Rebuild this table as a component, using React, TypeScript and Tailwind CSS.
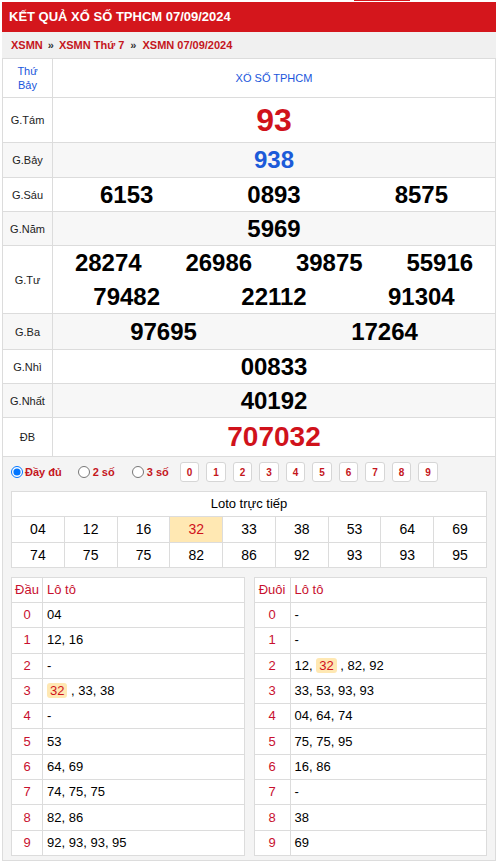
import React from "react";

const RED = "text-[#d0121b]";

const loto = [
  ["04", "12", "16", "32", "33", "38", "53", "64", "69"],
  ["74", "75", "75", "82", "86", "92", "93", "93", "95"],
];

// đầu / đuôi lists; "32" gets the highlight chip
const dau: string[][] = [
  ["04"],
  ["12", "16"],
  [],
  ["32", "33", "38"],
  [],
  ["53"],
  ["64", "69"],
  ["74", "75", "75"],
  ["82", "86"],
  ["92", "93", "93", "95"],
];
const duoi: string[][] = [
  [],
  [],
  ["12", "32", "82", "92"],
  ["33", "53", "93", "93"],
  ["04", "64", "74"],
  ["75", "75", "95"],
  ["16", "86"],
  [],
  ["38"],
  ["69"],
];

const LotoList = ({ nums }: { nums: string[] }) => {
  if (nums.length === 0) return <span>-</span>;
  return (
    <span>
      {nums.map((n, i) => (
        <React.Fragment key={i}>
          {i > 0 && (nums[i - 1] === "32" ? " , " : ", ")}
          {n === "32" ? (
            <span className="inline-block rounded-[3px] bg-[#ffe8b3] px-[3px] leading-[15px] text-[#d0121b]">
              32
            </span>
          ) : (
            n
          )}
        </React.Fragment>
      ))}
    </span>
  );
};

const HeadTail = ({ title, data, colW }: { title: string; data: string[][]; colW: string }) => (
  <table className="w-full table-fixed border-collapse bg-white text-[13px] leading-[16px]">
    <thead>
      <tr className="h-[25px]">
        <th className={`${colW} border border-[#dcdcdc] font-normal text-[#c8102e]`}>{title}</th>
        <th className="border border-[#dcdcdc] px-[4px] text-left font-normal text-[#c8102e]">Lô tô</th>
      </tr>
    </thead>
    <tbody>
      {data.map((nums, i) => (
        <tr key={i} className="h-[25.3px]">
          <td className="border border-[#dcdcdc] text-center text-[#c8102e]">{i}</td>
          <td className="border border-[#dcdcdc] px-[4px] text-black">
            <LotoList nums={nums} />
          </td>
        </tr>
      ))}
    </tbody>
  </table>
);

const Label = ({ children }: { children: React.ReactNode }) => (
  <td className="w-[50px] border border-[#dcdcdc] text-center text-[11px] leading-[14px] font-normal text-[#222]">
    {children}
  </td>
);

const App = () => {
  return (
    <div className="w-[499px] bg-white font-['Liberation_Sans',Arial,sans-serif]">
      {/* top menu strip */}
      <div className="h-[2px]">
        <div className="ml-[354px] h-[1px] w-[56px] bg-[#d4161c]" />
      </div>

      <div className="ml-[2px] w-[494px]">
        <div className="flex h-[30px] items-center bg-[#d4161c] px-[7px] text-[13px] font-bold text-white">
          KẾT QUẢ XỔ SỐ TPHCM 07/09/2024
        </div>
        <div className="flex h-[26px] items-center bg-[#f0f0f0] px-[9px] text-[11px] font-bold text-[#c4161c]">
          <span>XSMN</span>
          <span className="mx-[5px] text-[#333]">»</span>
          <span>XSMN Thứ 7</span>
          <span className="mx-[6px] text-[#333]">»</span>
          <span>XSMN 07/09/2024</span>
        </div>

        <table className="w-full table-fixed border-collapse font-bold leading-none">
          <tbody>
            <tr className="h-[39px] bg-white">
              <td className="w-[50px] border border-[#dcdcdc] text-center text-[11px] leading-[14px] font-normal text-[#1a56db]">
                Thứ
                <br />
                Bảy
              </td>
              <td className="border border-[#dcdcdc] text-center text-[11px] font-normal text-[#1a56db]">XỔ SỐ TPHCM</td>
            </tr>
            <tr className="h-[45px] bg-white">
              <Label>G.Tám</Label>
              <td className={`border border-[#dcdcdc] text-center text-[32px] ${RED}`}>93</td>
            </tr>
            <tr className="h-[35px] bg-[#f7f7f7]">
              <Label>G.Bảy</Label>
              <td className="border border-[#dcdcdc] text-center text-[24px] text-[#1c5bd9]">938</td>
            </tr>
            <tr className="h-[34px] bg-white">
              <Label>G.Sáu</Label>
              <td className="border border-[#dcdcdc] text-[24px] text-black">
                <div className="grid grid-cols-3 text-center">
                  <span>6153</span>
                  <span>0893</span>
                  <span>8575</span>
                </div>
              </td>
            </tr>
            <tr className="h-[34px] bg-[#f7f7f7]">
              <Label>G.Năm</Label>
              <td className="border border-[#dcdcdc] text-center text-[24px] text-black">5969</td>
            </tr>
            <tr className="h-[68px] bg-white">
              <Label>G.Tư</Label>
              <td className="border border-[#dcdcdc] text-[24px] text-black">
                <div className="grid h-[34px] grid-cols-4 items-center text-center">
                  <span>28274</span>
                  <span>26986</span>
                  <span>39875</span>
                  <span>55916</span>
                </div>
                <div className="grid h-[33px] grid-cols-3 items-center text-center">
                  <span>79482</span>
                  <span>22112</span>
                  <span>91304</span>
                </div>
              </td>
            </tr>
            <tr className="h-[36px] bg-[#f7f7f7]">
              <Label>G.Ba</Label>
              <td className="border border-[#dcdcdc] text-[24px] text-black">
                <div className="grid grid-cols-2 text-center">
                  <span>97695</span>
                  <span>17264</span>
                </div>
              </td>
            </tr>
            <tr className="h-[34px] bg-white">
              <Label>G.Nhì</Label>
              <td className="border border-[#dcdcdc] text-center text-[24px] text-black">00833</td>
            </tr>
            <tr className="h-[34px] bg-[#f7f7f7]">
              <Label>G.Nhất</Label>
              <td className="border border-[#dcdcdc] text-center text-[24px] text-black">40192</td>
            </tr>
            <tr className="h-[39px] bg-white">
              <Label>ĐB</Label>
              <td className={`border border-[#dcdcdc] text-center text-[28px] ${RED}`}>707032</td>
            </tr>
          </tbody>
        </table>

        {/* loto panel */}
        <div className="border border-t-0 border-[#dcdcdc] bg-[#f4f4f4] px-[8px] pt-[5px] pb-[4px]">
          <div className="flex h-[20px] items-center text-[11px] font-bold text-[#c4161c]">
            <label className="flex items-center">
              <input type="radio" name="mode" defaultChecked className="m-0 h-[12px] w-[12px]" />
              <span className="ml-[2px]">Đầy đủ</span>
            </label>
            <label className="ml-[16px] flex items-center">
              <input type="radio" name="mode" className="m-0 h-[12px] w-[12px]" />
              <span className="ml-[3px]">2 số</span>
            </label>
            <label className="ml-[17px] flex items-center">
              <input type="radio" name="mode" className="m-0 h-[12px] w-[12px]" />
              <span className="ml-[3px]">3 số</span>
            </label>
            <div className="ml-[11px] flex gap-[7px]">
              {["0", "1", "2", "3", "4", "5", "6", "7", "8", "9"].map((d) => (
                <button
                  key={d}
                  className="flex h-[20px] w-[19.5px] items-center justify-center rounded-[3px] border border-[#d6d6d6] bg-white text-[10px] font-bold text-[#c4161c]"
                >
                  {d}
                </button>
              ))}
            </div>
          </div>

          <table className="mt-[9px] w-full table-fixed border-collapse bg-white text-[14px] leading-[16px] text-black">
            <thead>
              <tr className="h-[25px]">
                <th colSpan={9} className="border border-[#dcdcdc] text-[13px] font-normal">
                  Loto trực tiếp
                </th>
              </tr>
            </thead>
            <tbody>
              {loto.map((row, r) => (
                <tr key={r} className="h-[25.5px]">
                  {row.map((n, c) => (
                    <td
                      key={c}
                      className={
                        n === "32"
                          ? "border border-[#dcdcdc] bg-[#ffe8b3] text-center text-[#d0121b]"
                          : "border border-[#dcdcdc] text-center"
                      }
                    >
                      {n}
                    </td>
                  ))}
                </tr>
              ))}
            </tbody>
          </table>

          <div className="mt-[9px] grid grid-cols-2 gap-[9px]">
            <HeadTail title="Đầu" data={dau} colW="w-[31px]" />
            <HeadTail title="Đuôi" data={duoi} colW="w-[36px]" />
          </div>
        </div>
      </div>
    </div>
  );
};

export default App;
